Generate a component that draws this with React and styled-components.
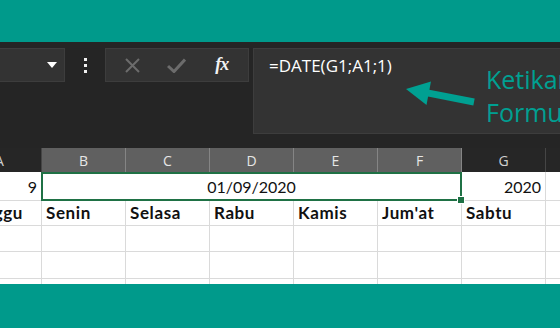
import React from "react";
import styled, { createGlobalStyle } from "styled-components";

const GlobalStyle = createGlobalStyle`
  html, body {
    margin: 0;
    padding: 0;
    background: #252525;
  }
`;

const Page = styled.div`
  width: 560px;
  height: 328px;
  overflow: hidden;
  display: flex;
  flex-direction: column;
  background: #252525;
`;

const Band = styled.div`
  flex: none;
  height: ${(p) => p.h}px;
  background: #009a8b;
`;

const Toolbar = styled.div`
  flex: none;
  height: 106px;
  box-sizing: border-box;
  padding-top: 6px;
  display: flex;
  align-items: flex-start;
  background: #252525;

  & > * {
    flex: none;
  }
`;

const NameBox = styled.div`
  width: 66px;
  height: 34px;
  box-sizing: border-box;
  margin-left: -1px;
  background: #333333;
  border: 1px solid #3d3d3d;
  display: flex;
  align-items: center;
  justify-content: flex-end;
  padding-right: 7px;
`;

const Caret = styled.div`
  width: 0;
  height: 0;
  border-left: 5px solid transparent;
  border-right: 5px solid transparent;
  border-top: 6px solid #ffffff;
`;

const Dots = styled.div`
  width: 40px;
  height: 34px;
  display: flex;
  flex-direction: column;
  align-items: center;
  justify-content: center;
  gap: 3px;

  span {
    width: 3px;
    height: 3px;
    background: #f0f0f0;
  }
`;

const ButtonBox = styled.div`
  width: 144px;
  height: 34px;
  box-sizing: border-box;
  background: #333333;
  border: 1px solid #3d3d3d;
  display: flex;
  align-items: center;
  justify-content: space-around;
  padding: 0 4px;
`;

const IconButton = styled.div`
  width: 30px;
  display: flex;
  align-items: center;
  justify-content: center;
  color: ${(p) => (p.active ? "#f2f2f2" : "#6c6c6c")};
`;

const Fx = styled.span`
  font-family: "Liberation Serif", "DejaVu Serif", serif;
  font-style: italic;
  font-weight: bold;
  font-size: 18px;
  letter-spacing: -1px;
  color: #f2f2f2;
  margin-top: -2px;
`;

const FormulaBar = styled.div`
  position: relative;
  width: 320px;
  height: 86px;
  margin-left: 4px;
  box-sizing: border-box;
  background: #333333;
  border: 1px solid #3d3d3d;
  padding: 5px 0 0 15px;
  font-family: "Open Sans", "Noto Sans", sans-serif;
  font-size: 17px;
  color: #ffffff;
`;

const Arrow = styled.svg`
  position: absolute;
  left: 148px;
  top: 30px;
`;

const Note = styled.div`
  position: absolute;
  left: 232px;
  top: 14px;
  font-family: "Open Sans", "Noto Sans", sans-serif;
  font-size: 25px;
  line-height: 33px;
  color: #00a092;
  white-space: nowrap;
`;

const Sheet = styled.div`
  flex: none;
  height: 136px;
  overflow: hidden;
  background: #ffffff;
`;

const Grid = styled.div`
  margin-left: -42px;
  display: grid;
  grid-template-columns: repeat(8, 84px);
  grid-template-rows: 24px 29px 25px 26px 27px 27px;
`;

const Head = styled.div`
  box-sizing: border-box;
  display: flex;
  align-items: center;
  justify-content: center;
  background: ${(p) => (p.selected ? "#606060" : "#262626")};
  border-right: 1px solid ${(p) => (p.selected ? "#858585" : "#454545")};
  font-family: "Open Sans", "Noto Sans", sans-serif;
  font-size: 14px;
  color: ${(p) => (p.selected ? "#e6e6e6" : "#d0d0d0")};
`;

const Cell = styled.div`
  box-sizing: border-box;
  display: flex;
  align-items: flex-end;
  justify-content: ${(p) => (p.right ? "flex-end" : "flex-start")};
  padding: 0 4px ${(p) => (p.first ? 3 : 2)}px 4px;
  border-right: 1px solid #dadada;
  border-bottom: 1px solid #dadada;
  font-family: Lato, "Liberation Sans", sans-serif;
  font-size: ${(p) => (p.bold ? 17 : 16)}px;
  letter-spacing: ${(p) => (p.bold ? 0.6 : 0)}px;
  line-height: 20px;
  font-weight: ${(p) => (p.bold ? 700 : 400)};
  color: #111111;
  white-space: nowrap;
`;

const Merged = styled(Cell)`
  position: relative;
  grid-column: span 5;
  justify-content: center;
  margin-left: -1px;
  border: 2px solid #1f7145;
  padding-bottom: 2px;
`;

const Handle = styled.div`
  position: absolute;
  right: -5px;
  bottom: -5px;
  width: 6px;
  height: 6px;
  background: #1f7145;
  border: 1px solid #ffffff;
`;

const columns = ["A", "B", "C", "D", "E", "F", "G", ""];
const days = ["Minggu", "Senin", "Selasa", "Rabu", "Kamis", "Jum'at", "Sabtu", ""];

const App = () => {
  return (
    <Page>
      <GlobalStyle />
      <Band h={42} />
      <Toolbar>
        <NameBox>
          <Caret />
        </NameBox>
        <Dots>
          <span />
          <span />
          <span />
        </Dots>
        <ButtonBox>
          <IconButton>
            <svg width="15" height="15" viewBox="0 0 15 15">
              <path d="M1 1 L14 14 M14 1 L1 14" stroke="currentColor" strokeWidth="2" />
            </svg>
          </IconButton>
          <IconButton>
            <svg width="19" height="15" viewBox="0 0 19 15">
              <path d="M1 8 L7 13.5 L18 1.5" stroke="currentColor" strokeWidth="3" fill="none" />
            </svg>
          </IconButton>
          <IconButton active>
            <Fx>fx</Fx>
          </IconButton>
        </ButtonBox>
        <FormulaBar>
          =DATE(G1;A1;1)
          <Arrow width="80" height="34" viewBox="0 0 80 34">
            <path d="M24 13.6 L72 23" stroke="#00a092" strokeWidth="7" />
            <path d="M4 10 L29 2.5 L24.5 26 Z" fill="#00a092" />
          </Arrow>
          <Note>
            Ketikan
            <br />
            Formula
          </Note>
        </FormulaBar>
      </Toolbar>
      <Sheet>
        <Grid>
          {columns.map((c, i) => (
            <Head key={"h" + i} selected={i >= 1 && i <= 5}>
              {c}
            </Head>
          ))}
          <Cell right first>
            9
          </Cell>
          <Merged>
            01/09/2020
            <Handle />
          </Merged>
          <Cell right first>
            2020
          </Cell>
          <Cell first />
          {days.map((d, i) => (
            <Cell key={"d" + i} bold>
              {d}
            </Cell>
          ))}
          {Array.from({ length: 24 }).map((_, i) => (
            <Cell key={"e" + i} />
          ))}
        </Grid>
      </Sheet>
      <Band h={44} />
    </Page>
  );
};

export default App;
